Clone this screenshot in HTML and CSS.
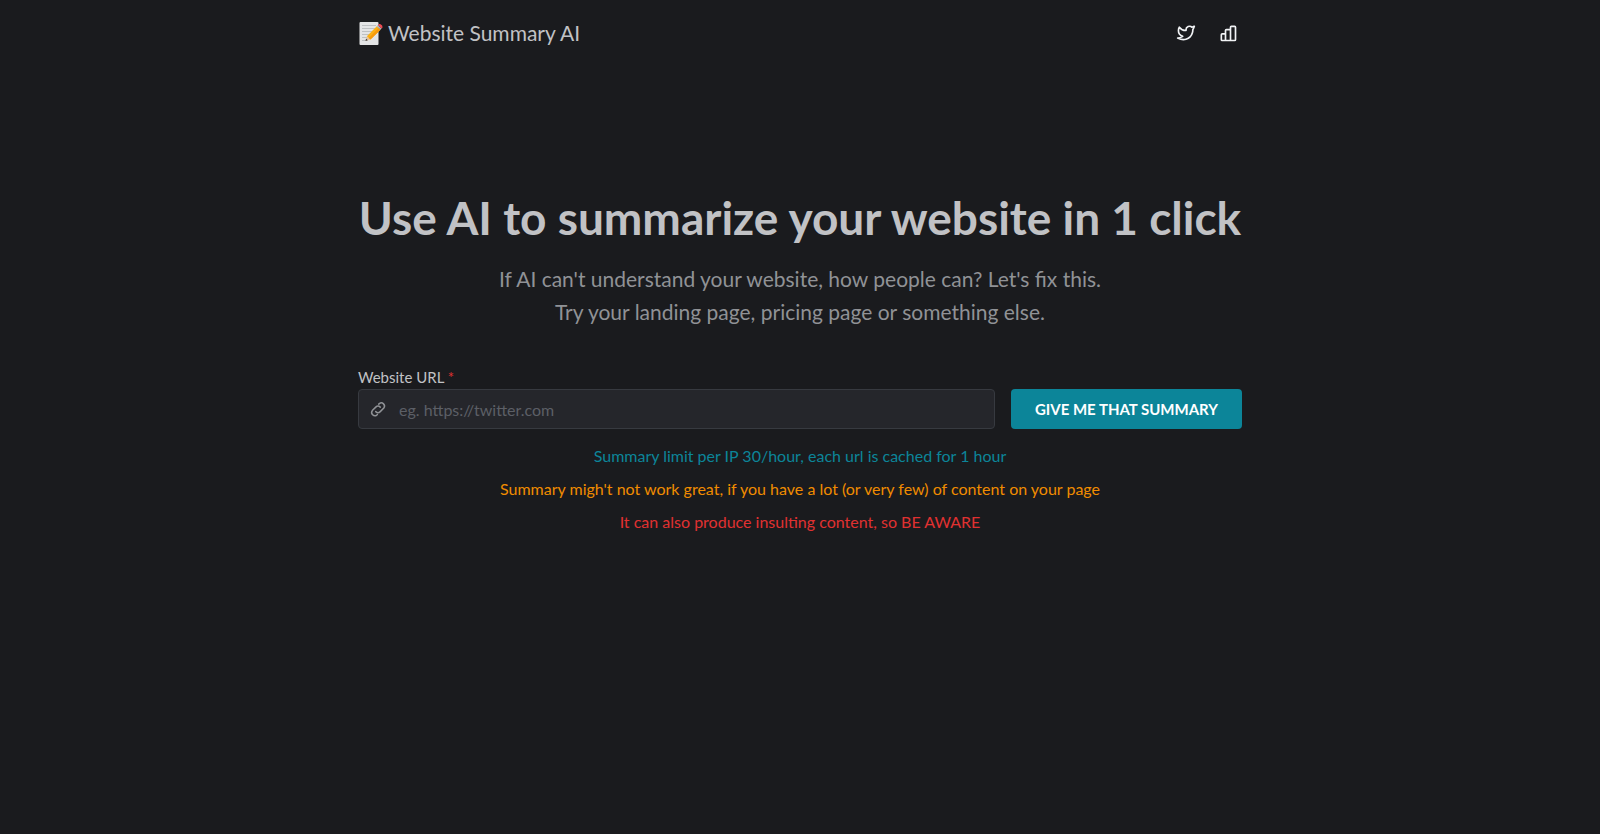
FILE: index.html
```html
<!DOCTYPE html>
<html lang="en">
<head>
<meta charset="utf-8">
<meta name="viewport" content="width=device-width, initial-scale=1">
<title>Website Summary AI</title>
<link rel="stylesheet" href="styles.css">
</head>
<body>
<header class="header container">
  <a class="brand" href="#">
    <svg class="brand-logo" viewBox="0 0 25 25" aria-hidden="true">
      <rect x="1.500" y="1" width="19" height="23" rx="1" fill="#e4e5e6"/>
      <path d="M4 4.500h14M4 7.500h14M4 10.500h11M4 13.500h8M4 16.500h5M4 19.500h4" stroke="#b4b7ba" stroke-width="0.800"/>
      <path d="M7.500 20l1.400-4.800 3.600 3.400z" fill="#e8c49a"/>
      <path d="M7.500 20l0.600-2.200 1.700 1.500z" fill="#33363a"/>
      <path d="M8.900 15.200L18.800 5.200l3.700 3.500-10 9.900z" fill="#fbb116"/>
      <path d="M10.800 17L20.600 6.900l1.900 1.800-10 9.900z" fill="#f79a0c"/>
      <path d="M18.800 5.200l1.100-1.100 3.700 3.500-1.100 1.100z" fill="#aeb4b8"/>
      <path d="M19.900 4.100l0.700-0.700c1.600-1.300 4.900 1.500 3.600 3.500l-0.600 0.700z" fill="#ef4b52"/>
    </svg>
    <span>Website Summary AI</span>
  </a>
  <nav class="links" aria-label="Links">
    <a class="icon-link" href="#" aria-label="Twitter">
      <svg class="icon" viewBox="0 0 24 24"><path d="M22 4.010c-1 .490-1.980.689-3 .990-1.121-1.265-2.783-1.335-4.380-.737S11.977 6.323 12 8v1c-3.245.083-6.135-1.395-8-4 0 0-4.182 7.433 4 11-1.872 1.247-3.739 2.088-6 2 3.308 1.803 6.913 2.423 10.034 1.517 3.580-1.040 6.522-3.723 7.651-7.742a13.840 13.840 0 0 0 .497-3.753C20.180 7.773 21.692 5.250 22 4.009z"/></svg>
    </a>
    <a class="icon-link" href="#" aria-label="Statistics">
      <svg class="icon" viewBox="0 0 24 24"><path d="M9 21H5a1 1 0 0 1-1-1v-6a1 1 0 0 1 1-1h4m0 8V9a1 1 0 0 1 1-1h5m-6 13h6m0 0V5a1 1 0 0 1 1-1h4a1 1 0 0 1 1 1v15a1 1 0 0 1-1 1z"/></svg>
    </a>
  </nav>
</header>
<main class="main container">
  <h1 class="title">Use AI to summarize your website in 1 click</h1>
  <p class="lead">If AI can't understand your website, how people can? Let's fix this.<br>Try your landing page, pricing page or something else.</p>
  <form class="form">
    <div class="field">
      <label class="label" for="url">Website URL <span class="required">*</span></label>
      <div class="input-box">
        <svg class="link-icon" viewBox="0 0 24 24" aria-hidden="true"><path d="M9 15.500a4.300 4.300 0 0 0 6 0l4.800-4.800a4.300 4.300 0 0 0-6-6l-.8.8M15 9.500a4.300 4.300 0 0 0-6 0l-4.600 4.600a4.300 4.300 0 0 0 6 6l.8-.8"/></svg>
        <input class="input" id="url" type="url" required placeholder="eg. https://twitter.com">
      </div>
    </div>
    <button class="submit" type="submit">GIVE ME THAT SUMMARY</button>
  </form>
  <div class="notes">
    <p class="note note-info">Summary limit per IP 30/hour, each url is cached for 1 hour</p>
    <p class="note note-warn">Summary migh't not work great, if you have a lot (or very few) of content on your page</p>
    <p class="note note-danger">It can also produce insulting content, so BE AWARE</p>
  </div>
</main>
</body>
</html>
```
FILE: styles.css
```css
* { box-sizing: border-box; }
body {
  margin: 0;
  min-height: 100vh;
  background: #1a1b1e;
  color: #c1c2c5;
  font-family: Lato, "Open Sans", sans-serif;
  font-size: 16px;
}
.container {
  max-width: 916px;
  margin: 0 auto;
  padding: 0 16px;
}
.header {
  display: flex;
  align-items: center;
  justify-content: space-between;
  height: 66px;
}
.brand {
  display: flex;
  align-items: center;
  gap: 5px;
  color: inherit;
  font-size: 21px;
  line-height: 24px;
  font-weight: 400;
  text-decoration: none;
}
.brand-logo { width: 25px; height: 25px; }
.links { display: flex; gap: 14px; }
.icon-link {
  display: grid;
  place-items: center;
  width: 28px;
  height: 28px;
  color: #f1f3f5;
}
.icon, .link-icon {
  fill: none;
  stroke: currentColor;
  stroke-width: 2;
  stroke-linecap: round;
  stroke-linejoin: round;
}
.icon { width: 20px; height: 20px; }
.main { padding-top: 120px; }
.title {
  margin: 0;
  font-size: 46px;
  line-height: 64px;
  font-weight: 700;
  text-align: center;
}
.lead {
  margin: 12px 0 0;
  color: #909296;
  font-size: 21px;
  line-height: 33px;
  font-weight: 400;
  text-align: center;
}
.form {
  display: flex;
  align-items: flex-end;
  gap: 16px;
  margin-top: 37px;
}
.field { flex: 1; }
.label {
  display: block;
  font-size: 15px;
  line-height: 24px;
}
.required { color: #e03131; }
.input-box {
  display: flex;
  align-items: center;
  height: 40px;
  padding-left: 10px;
  background: #25262b;
  border: 1px solid #373a40;
  border-radius: 4px;
  color: #909296;
}
.link-icon { flex: none; width: 18px; height: 18px; }
.input {
  flex: 1;
  height: 100%;
  padding: 0 12px;
  background: none;
  border: 0;
  outline: 0;
  color: #c1c2c5;
  font: inherit;
}
.input::placeholder { color: #5c5f66; opacity: 1; }
.submit {
  height: 40px;
  padding: 0 24px;
  background: #0c8599;
  border: 0;
  border-radius: 4px;
  color: #fff;
  font: inherit;
  font-size: 15px;
  font-weight: 700;
}
.notes {
  display: grid;
  gap: 9px;
  margin-top: 15px;
  text-align: center;
}
.note { margin: 0; line-height: 24px; }
.note-info { color: #0c8599; }
.note-warn { color: #f08c00; }
.note-danger { color: #e03131; }
```
